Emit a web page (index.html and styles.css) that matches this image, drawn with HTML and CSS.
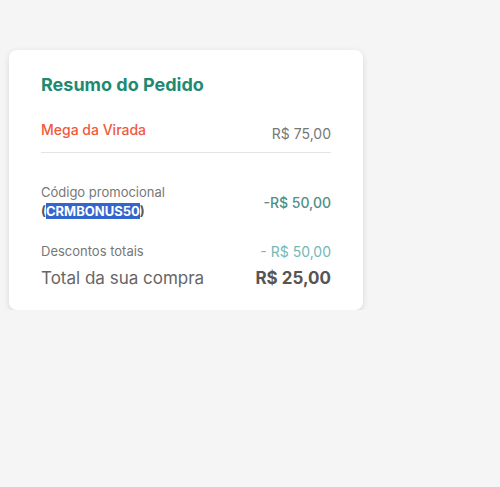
FILE: index.html
```html
<!DOCTYPE html>
<html lang="pt-BR">
<head>
    <meta charset="UTF-8">
    <meta name="viewport" content="width=device-width, initial-scale=1.0">
    <title>Resumo do Pedido</title>
    <link rel="stylesheet" href="styles.css">
</head>
<body>
    <div class="summary-card">
        <h2 class="summary-title">Resumo do Pedido</h2>

        <div class="item-row">
            <span class="item-name">Mega da Virada</span>
            <span class="item-price">R$ 75,00</span>
        </div>

        <div class="promo-row">
            <div class="promo-label">
                Código promocional<br>
                <span class="promo-code">(<span class="selected">CRMBONUS50</span>)</span>
            </div>
            <span class="promo-value">-R$ 50,00</span>
        </div>

        <div class="discount-row">
            <span>Descontos totais</span>
            <span class="discount-value">- R$ 50,00</span>
        </div>

        <div class="total-row">
            <span>Total da sua compra</span>
            <span class="total-value">R$ 25,00</span>
        </div>
    </div>
</body>
</html>
```

FILE: styles.css
```css
body {
    margin: 0;
    padding: 50px 0 0 9px;
    background: #f5f5f5;
    font-family: Inter, "Noto Sans", sans-serif;
    color: #6b6b6b;
}
.summary-card {
    width: 290px;
    background: white;
    padding: 24px 32px 22px 32px;
    border-radius: 8px;
    box-shadow: 0px 2px 6px rgba(0,0,0,0.12);
}
.summary-title {
    margin: 0 0 26px 0;
    font-size: 18px;
    font-weight: 700;
    color: #1e8a72;
}
.item-row {
    display: flex;
    justify-content: space-between;
    padding-bottom: 10px;
    border-bottom: 1px solid #e4e4e4;
}
.item-name {
    font-size: 14px;
    font-weight: 500;
    color: #f0593c;
}
.item-price {
    font-size: 14px;
    padding-top: 4px;
    color: #777;
}
.promo-row {
    display: flex;
    justify-content: space-between;
    align-items: center;
    margin-top: 30px;
}
.promo-label {
    font-size: 13px;
    line-height: 19px;
    color: #777;
}
.promo-code {
    font-size: 13px;
    font-weight: 700;
    color: #555;
}
.selected {
    background: #3366cc;
    color: white;
}
.promo-value {
    font-size: 14px;
    font-weight: 500;
    color: #4f8f87;
}
.discount-row {
    display: flex;
    justify-content: space-between;
    margin-top: 22px;
    font-size: 13px;
    color: #777;
}
.discount-value {
    font-size: 14px;
    color: #75b8b6;
}
.total-row {
    display: flex;
    justify-content: space-between;
    margin-top: 8px;
    font-size: 17px;
    color: #666;
}
.total-value {
    font-weight: 700;
    color: #555;
}
```
